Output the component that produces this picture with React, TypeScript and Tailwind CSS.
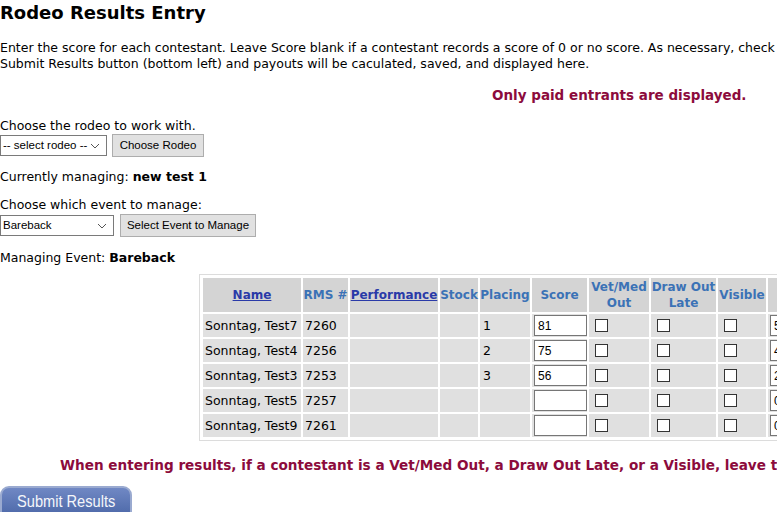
import React from "react";

const V = { fontFamily: '"DejaVu Sans", Verdana, sans-serif' };
const CTRL = { fontFamily: '"Liberation Sans", Tahoma, Arial, sans-serif' };

function Chevron() {
  return (
    <svg width="10" height="6" viewBox="0 0 10 6" className="shrink-0">
      <path d="M1 1 L5 5 L9 1" fill="none" stroke="#555" strokeWidth="1" />
    </svg>
  );
}

function Select({ label, width }: { label: string; width: string }) {
  return (
    <div
      className={`${width} h-[21px] border border-[#7a7a7a] bg-white flex items-center justify-between pl-[2px] pr-[6px] text-[11.5px] text-black whitespace-nowrap`}
      style={CTRL}
    >
      <span>{label}</span>
      <Chevron />
    </div>
  );
}

function Btn({ label, width }: { label: string; width: string }) {
  return (
    <div
      className={`${width} h-[23px] border border-[#adadad] bg-[#e1e1e1] flex items-center justify-center text-[11.5px] text-black whitespace-nowrap`}
      style={CTRL}
    >
      {label}
    </div>
  );
}

function Check() {
  return <div className="ml-[4px] w-[13px] h-[13px] border border-[#333] bg-white" />;
}

function TInput({ value }: { value: string }) {
  return (
    <div
      className="w-[53px] h-[21px] border border-[#767676] bg-white flex items-center pl-[3px] text-[12px] text-black"
      style={CTRL}
    >
      {value}
    </div>
  );
}

const rows = [
  { name: "Sonntag, Test7", rms: "7260", place: "1", score: "81", pay: "525.00" },
  { name: "Sonntag, Test4", rms: "7256", place: "2", score: "75", pay: "420.00" },
  { name: "Sonntag, Test3", rms: "7253", place: "3", score: "56", pay: "262.50" },
  { name: "Sonntag, Test5", rms: "7257", place: "", score: "", pay: "0.00" },
  { name: "Sonntag, Test9", rms: "7261", place: "", score: "", pay: "0.00" },
];

export default function App() {
  const th =
    "bg-[#d4d4d4] text-[#3b72b6] font-bold text-[12px] leading-[16px] text-center p-0 align-middle whitespace-nowrap overflow-visible";
  const td =
    "bg-[#e0e0e0] text-black text-[12.5px] leading-[16px] p-0 pl-[2px] h-[23px] align-middle whitespace-nowrap overflow-visible";
  return (
    <div className="w-[777px] h-[512px] overflow-hidden bg-white text-black" style={V}>
      <div className="w-[1000px]">
        <h1 className="mt-[2px] text-[18px] leading-[22px] font-bold">Rodeo Results Entry</h1>
        <p className="mt-[16px] text-[12.5px] leading-[16px] whitespace-nowrap">
          Enter the score for each contestant. Leave Score blank if a contestant records a score of 0 or no score. As necessary, check the appropriate boxes, then click the
          <br />
          Submit Results button (bottom left) and payouts will be caculated, saved, and displayed here.
        </p>
        <div className="mt-[15px] pl-[492px] text-[13.5px] leading-[16px] font-bold text-[#8c0b3c]">
          Only paid entrants are displayed.
        </div>
        <div className="mt-[15px] text-[12.5px] leading-[16px]">Choose the rodeo to work with.</div>
        <div className="mt-0 flex items-center gap-[5px] h-[23px]">
          <Select label="-- select rodeo --" width="w-[107px]" />
          <Btn label="Choose Rodeo" width="w-[92px]" />
        </div>
        <div className="mt-[12px] text-[12.5px] leading-[16px]">
          Currently managing: <b>new test 1</b>
        </div>
        <div className="mt-[12px] text-[12.5px] leading-[16px]">Choose which event to manage:</div>
        <div className="mt-[1px] flex items-center gap-[6px] h-[23px]">
          <Select label="Bareback" width="w-[114px]" />
          <Btn label="Select Event to Manage" width="w-[136px]" />
        </div>
        <div className="mt-[13px] text-[12.5px] leading-[16px]">
          Managing Event: <b>Bareback</b>
        </div>
        <table className="mt-[8px] ml-[199px] w-[653px] border border-[#dcdcdc] border-separate border-spacing-[2px] p-[1px] table-fixed">
          <colgroup>
            <col className="w-[98px]" />
            <col className="w-[45px]" />
            <col className="w-[88px]" />
            <col className="w-[38px]" />
            <col className="w-[50px]" />
            <col className="w-[55px]" />
            <col className="w-[60px]" />
            <col className="w-[65px]" />
            <col className="w-[48px]" />
            <col className="w-[80px]" />
          </colgroup>
          <thead>
            <tr className="h-[34px]">
              <th className={th}>
                <span className="text-[#2a3aa8] underline">Name</span>
              </th>
              <th className={th}>RMS #</th>
              <th className={th}>
                <span className="text-[#2a3aa8] underline">Performance</span>
              </th>
              <th className={th}>Stock</th>
              <th className={th}>Placing</th>
              <th className={th}>Score</th>
              <th className={th}>
                Vet/Med
                <br />
                Out
              </th>
              <th className={th}>
                Draw Out
                <br />
                Late
              </th>
              <th className={th}>Visible</th>
              <th className={th}></th>
            </tr>
          </thead>
          <tbody>
            {rows.map((r) => (
              <tr key={r.name}>
                <td className={td}>{r.name}</td>
                <td className={td}>{r.rms}</td>
                <td className={td}></td>
                <td className={td}></td>
                <td className={td + " pl-[3px]"}>{r.place}</td>
                <td className={td + " pl-[1px]"}>
                  <TInput value={r.score} />
                </td>
                <td className={td}>
                  <Check />
                </td>
                <td className={td}>
                  <Check />
                </td>
                <td className={td}>
                  <Check />
                </td>
                <td className={td + " pl-0"}>
                  <div
                    className="w-[70px] h-[21px] border border-[#767676] bg-white flex items-center pl-[3px] text-[12px]"
                    style={CTRL}
                  >
                    {r.pay}
                  </div>
                </td>
              </tr>
            ))}
          </tbody>
        </table>
        <div className="mt-[16px] pl-[60px] text-[13.6px] leading-[16px] font-bold text-[#8c0b3c] whitespace-nowrap">
          When entering results, if a contestant is a Vet/Med Out, a Draw Out Late, or a Visible, leave the Score blank.
        </div>
        <div className="mt-[13px]">
          <div className="w-[132px] h-[34px] rounded-[9px] border-2 border-[#9aaad0] bg-gradient-to-b from-[#7088c4] to-[#4a66a6] flex items-start justify-center pt-[4px] text-[#f4f6fa]">
            <span
              className="inline-block text-[17px] leading-[20px] scale-x-[0.86]"
              style={{ fontFamily: '"Liberation Sans Narrow", "Arial Narrow", "Liberation Sans", sans-serif' }}
            >
              Submit Results
            </span>
          </div>
        </div>
      </div>
    </div>
  );
}
